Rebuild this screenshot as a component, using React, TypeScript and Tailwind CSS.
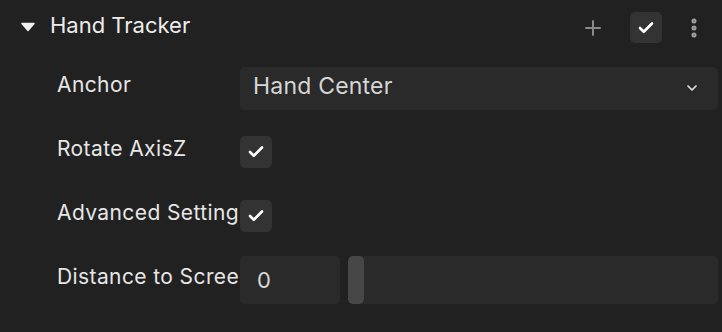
import { Check, ChevronDown, EllipsisVertical, Plus } from 'lucide-react';

function CheckBox() {
	return (
		<div className="w-[32px] h-[32px] rounded-[5px] bg-[#333333] flex items-center justify-center shrink-0">
			<Check size={18} strokeWidth={3.5} className="text-white" />
		</div>
	);
}

function Row({ label, children }: { label: string; children: React.ReactNode }) {
	return (
		<div className="flex items-center h-[64px]">
			<div className="w-[183px] shrink-0 whitespace-nowrap overflow-hidden text-[21px] tracking-[0.4px] text-[#e6e6e6] mb-[6px]">
				{label}
			</div>
			<div className="flex-1 flex items-center">{children}</div>
		</div>
	);
}

export default function App() {
	return (
		<main className="w-[722px] h-[332px] bg-[#212121] font-['Inter','Noto_Sans',sans-serif] overflow-hidden">
			<div className="flex items-center h-[56px] pl-[21px] pr-[16px]">
				<svg width="14" height="10" viewBox="0 0 14 10" className="shrink-0 -mt-[3px]">
					<path d="M1 1.5 L13 1.5 L7 8.5 Z" fill="#eeeeee" strokeLinejoin="round" stroke="#eeeeee" strokeWidth="1.5" />
				</svg>
				<span className="ml-[15px] text-[22px] text-[#ececec] mb-[6px]">Hand Tracker</span>
				<div className="ml-auto flex items-center -mt-[1px]">
					<Plus size={24} strokeWidth={2} className="text-[#8a8a8a]" />
					<div className="ml-[25px] w-[32px] h-[31px] rounded-[5px] bg-[#333333] flex items-center justify-center">
						<Check size={18} strokeWidth={3.5} className="text-white" />
					</div>
					<EllipsisVertical size={24} strokeWidth={3} className="ml-[20px] text-[#a0a0a0]" />
				</div>
			</div>
			<div className="pl-[57px] pr-[4px]">
				<Row label="Anchor">
					<div className="w-full h-[43px] rounded-[5px] bg-[#2a2a2a] flex items-center pl-[13px] pr-[18px]">
						<span className="text-[23px] tracking-[0.2px] text-[#d6d6d6] mb-[3px]">Hand Center</span>
						<ChevronDown size={16} strokeWidth={2.5} className="ml-auto text-[#e0e0e0]" />
					</div>
				</Row>
				<Row label="Rotate AxisZ">
					<CheckBox />
				</Row>
				<Row label="Advanced Setting">
					<CheckBox />
				</Row>
				<Row label="Distance to Screen">
					<div className="w-full flex items-center gap-[8px]">
						<div className="w-[100px] h-[48px] rounded-[5px] bg-[#2a2a2a] flex items-center pl-[17px] text-[22px] text-[#d6d6d6]">
							0
						</div>
						<div className="flex-1 h-[48px] rounded-[5px] bg-[#2a2a2a] flex">
							<div className="w-[16px] h-full rounded-[5px] bg-[#474747]" />
						</div>
					</div>
				</Row>
			</div>
		</main>
	);
}
